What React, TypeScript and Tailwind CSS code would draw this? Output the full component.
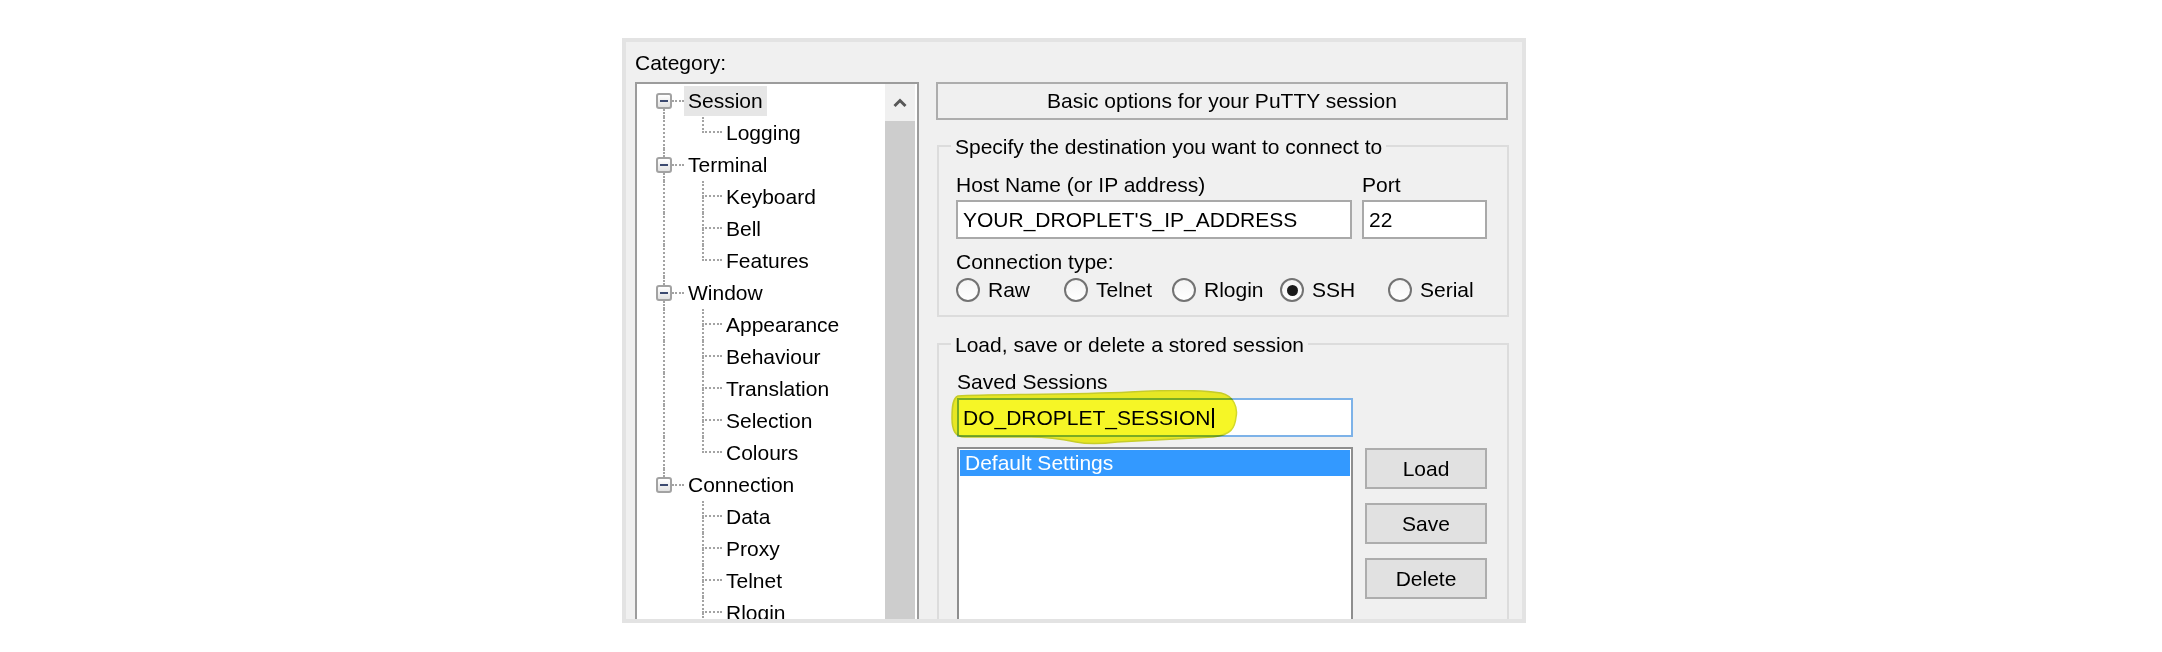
import React from "react";

const tree = [
  { label: "Session", children: ["Logging"] },
  { label: "Terminal", children: ["Keyboard", "Bell", "Features"] },
  { label: "Window", children: ["Appearance", "Behaviour", "Translation", "Selection", "Colours"] },
  // list goes on past the visible edge, so the last child keeps its line
  { label: "Connection", children: ["Data", "Proxy", "Telnet", "Rlogin"], more: true },
];

const dots = "border-dotted border-[#a3a3a3]";

const ExpandBox = () => (
  <div className="flex h-4 w-4 items-center justify-center rounded-[3px] border-2 border-[#a2a2a2] bg-gradient-to-b from-white to-[#e2e2e2]">
    <div className="h-[2px] w-[8px] bg-[#3c4a70]" />
  </div>
);

const TopRow = ({ label, first, last, selected }: { label: string; first: boolean; last: boolean; selected?: boolean }) => (
  <div className="flex h-8">
    <div className="w-[19px]" />
    <div className="flex w-4 flex-col">
      <div className={`ml-[7px] h-2 ${first ? "" : `border-l-2 ${dots}`}`} />
      <ExpandBox />
      <div className={`ml-[7px] h-2 ${last ? "" : `border-l-2 ${dots}`}`} />
    </div>
    <div className={`w-[12px] self-center border-t-2 ${dots}`} />
    <span className={`my-px px-1 leading-[30px] ${selected ? "bg-[#e6e6e6]" : ""}`}>{label}</span>
  </div>
);

const ChildRow = ({ label, parentLast, lastChild }: { label: string; parentLast: boolean; lastChild: boolean }) => (
  <div className="flex h-8">
    <div className="w-[19px]" />
    <div className="w-4">{!parentLast && <div className={`ml-[7px] h-full border-l-2 ${dots}`} />}</div>
    <div className="w-[30px]" />
    <div className="flex w-[20px] flex-col">
      <div className={`h-1/2 border-b-2 border-l-2 ${dots}`} />
      {!lastChild && <div className={`h-1/2 border-l-2 ${dots}`} />}
    </div>
    <span className="my-px px-1 leading-[30px]">{label}</span>
  </div>
);

const Radio = ({ label, checked }: { label: string; checked?: boolean }) => (
  <div className="flex items-center gap-2">
    <div className="flex h-6 w-6 items-center justify-center rounded-full border-2 border-[#737373] bg-gradient-to-b from-[#f4f4f4] to-white">
      {checked && <div className="h-[11px] w-[11px] rounded-full bg-[#1a1a1a]" />}
    </div>
    <span className="leading-6">{label}</span>
  </div>
);

const Button = ({ children }: { children: React.ReactNode }) => (
  <div className="flex h-[41px] w-[122px] items-center justify-center border-2 border-[#adadad] bg-[#e1e1e1]">
    {children}
  </div>
);

export default function App() {
  return (
    <div className="h-[652px] w-[2162px] bg-white pl-[622px] pt-[38px] font-['Liberation_Sans',Arial,sans-serif] text-[21px] text-black">
      <div className="flex h-[585px] w-[904px] overflow-hidden border-4 border-[#e3e3e3] bg-[#f0f0f0]">
        {/* Category tree */}
        <div className="w-[293px] shrink-0 pl-[9px] pt-[9px]">
          <div className="leading-6">Category:</div>
          <div className="mt-[7px] flex h-[540px] w-[284px] border-2 border-[#9c9c9c] bg-white">
            <div className="flex-1 overflow-hidden pt-px">
              {tree.map((node, i) => (
                <React.Fragment key={node.label}>
                  <TopRow label={node.label} first={i === 0} last={i === tree.length - 1} selected={i === 0} />
                  {node.children.map((c, j) => (
                    <ChildRow
                      key={c}
                      label={c}
                      parentLast={i === tree.length - 1}
                      lastChild={!node.more && j === node.children.length - 1}
                    />
                  ))}
                </React.Fragment>
              ))}
            </div>
            <div className="mr-[2px] flex w-[30px] flex-col">
              <div className="flex h-[37px] items-center justify-center bg-[#f0f0f0]">
                <svg width="16" height="10" viewBox="0 0 16 10">
                  <path d="M2.5 8 L8 2.5 L13.5 8" stroke="#585858" strokeWidth="3" fill="none" />
                </svg>
              </div>
              <div className="flex-1 bg-[#cdcdcd]" />
            </div>
          </div>
        </div>

        {/* Options panel */}
        <div className="ml-[17px] w-[573px] pt-[40px]">
          <div className="flex h-[38px] w-[572px] items-center justify-center border-2 border-[#adadad]">
            Basic options for your PuTTY session
          </div>

          <div className="ml-px mt-[25px] w-[572px] border-2 border-[#dcdcdc] pb-[13px] pl-[17px]">
            <div className="-mt-[12px] ml-[-5px] w-fit bg-[#f0f0f0] px-1 leading-6">
              Specify the destination you want to connect to
            </div>
            <div className="mt-[14px] flex gap-[10px]">
              <div className="w-[396px]">
                <div className="leading-6">Host Name (or IP address)</div>
                <div className="mt-[3px] flex h-[39px] items-center border-2 border-[#a9a9a9] bg-white pl-[5px]">
                  YOUR_DROPLET'S_IP_ADDRESS
                </div>
              </div>
              <div className="w-[125px]">
                <div className="leading-6">Port</div>
                <div className="mt-[3px] flex h-[39px] items-center border-2 border-[#a9a9a9] bg-white pl-[5px]">
                  22
                </div>
              </div>
            </div>
            <div className="mt-[11px] leading-6">Connection type:</div>
            <div className="mt-[4px] grid w-[540px] grid-cols-5">
              <Radio label="Raw" />
              <Radio label="Telnet" />
              <Radio label="Rlogin" />
              <Radio label="SSH" checked />
              <Radio label="Serial" />
            </div>
          </div>

          <div className="ml-px mt-[26px] h-[300px] w-[572px] border-2 border-[#dcdcdc] pl-[18px]">
            <div className="-mt-[12px] ml-[-6px] w-fit bg-[#f0f0f0] px-1 leading-6">
              Load, save or delete a stored session
            </div>
            <div className="mt-[13px] leading-6">Saved Sessions</div>
            <div className="relative mt-[4px] w-[396px]">
              <div className="flex h-[39px] items-center border-2 border-[#7db2e8] bg-white pl-[4px]">
                DO_DROPLET_SESSION
                <span className="ml-[2px] inline-block h-[20px] w-[2px] bg-black" />
              </div>
              <svg
                className="pointer-events-none absolute left-[-6px] top-[-8px] mix-blend-multiply"
                width="288"
                height="56"
                viewBox="0 0 288 56"
              >
                <path
                  d="M7,6 C40,4 120,5 179,2 C215,0 250,0 270,3 C283,6 287,18 285,27 C284,38 280,45 262,47 C225,49 190,51 166,52 C150,54 135,54 125,52 C110,49 95,47 80,47 L14,47 C4,47 1,40 1,28 C1,16 2,8 7,6 Z"
                  fill="#f6f626"
                  stroke="#d3d92c"
                  strokeWidth="1.5"
                />
              </svg>
            </div>
            <div className="mt-[10px] flex gap-[12px]">
              <div className="h-[200px] w-[396px] border-2 border-[#8e8e8e] bg-white p-px">
                <div className="flex h-[26px] items-center bg-[#3399ff] pl-[5px] text-white">Default Settings</div>
              </div>
              <div className="mt-px flex flex-col gap-[14px]">
                <Button>Load</Button>
                <Button>Save</Button>
                <Button>Delete</Button>
              </div>
            </div>
          </div>
        </div>
      </div>
    </div>
  );
}
